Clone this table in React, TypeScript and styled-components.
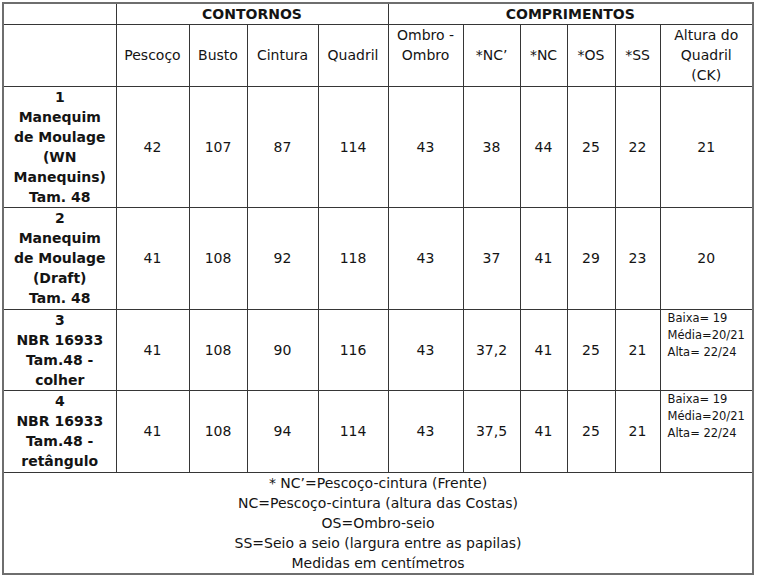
import React from 'react';
import styled, { createGlobalStyle } from 'styled-components';

const GlobalStyle = createGlobalStyle`
  html, body {
    margin: 0;
    padding: 0;
    background: #ffffff;
  }
`;

type Row = {
  label: string[];
  values: string[];
  altura: string[];
};

const contornos = ['Pescoço', 'Busto', 'Cintura', 'Quadril'];

const rows: Row[] = [
  {
    label: ['1', 'Manequim', 'de Moulage', '(WN', 'Manequins)', 'Tam. 48'],
    values: ['42', '107', '87', '114', '43', '38', '44', '25', '22'],
    altura: ['21'],
  },
  {
    label: ['2', 'Manequim', 'de Moulage', '(Draft)', 'Tam. 48'],
    values: ['41', '108', '92', '118', '43', '37', '41', '29', '23'],
    altura: ['20'],
  },
  {
    label: ['3', 'NBR 16933', 'Tam.48 -', 'colher'],
    values: ['41', '108', '90', '116', '43', '37,2', '41', '25', '21'],
    altura: ['Baixa= 19', 'Média=20/21', 'Alta= 22/24'],
  },
  {
    label: ['4', 'NBR 16933', 'Tam.48 -', 'retângulo'],
    values: ['41', '108', '94', '114', '43', '37,5', '41', '25', '21'],
    altura: ['Baixa= 19', 'Média=20/21', 'Alta= 22/24'],
  },
];

const rowHeights = [121, 102, 81, 82];

const legend = [
  '* NC’=Pescoço-cintura (Frente)',
  'NC=Pescoço-cintura (altura das Costas)',
  'OS=Ombro-seio',
  'SS=Seio a seio (largura entre as papilas)',
  'Medidas em centímetros',
];

const colWidths = [113, 73, 58, 71, 70, 75, 57, 47, 48, 45, 93];

const withBreaks = (lines: string[]) =>
  lines.map((line, i) => (
    <React.Fragment key={i}>
      {i > 0 && <br />}
      {line}
    </React.Fragment>
  ));

const App: React.FC = () => {
  return (
    <Page>
      <GlobalStyle />
      <Table>
        <colgroup>
          {colWidths.map((w, i) => (
            <col key={i} style={{ width: w }} />
          ))}
        </colgroup>
        <tbody>
          <tr style={{ height: 21 }}>
            <Cell />
            <GroupHead colSpan={4}>CONTORNOS</GroupHead>
            <GroupHead colSpan={6}>COMPRIMENTOS</GroupHead>
          </tr>
          <tr style={{ height: 62 }}>
            <Cell />
            {contornos.map((c) => (
              <Cell key={c}>{c}</Cell>
            ))}
            <Cell>{withBreaks(['Ombro -', 'Ombro', '\u00a0'])}</Cell>
            <Cell>*NC’</Cell>
            <Cell>*NC</Cell>
            <Cell>*OS</Cell>
            <Cell>*SS</Cell>
            <Cell>{withBreaks(['Altura do', 'Quadril', '(CK)'])}</Cell>
          </tr>
          {rows.map((row, r) => (
            <tr key={r} style={{ height: rowHeights[r] }}>
              <Label>{withBreaks(row.label)}</Label>
              {row.values.map((v, i) => (
                <Cell key={i}>{v}</Cell>
              ))}
              {row.altura.length > 1 ? (
                <NoteCell>{withBreaks(row.altura)}</NoteCell>
              ) : (
                <Cell>{row.altura[0]}</Cell>
              )}
            </tr>
          ))}
          <tr style={{ height: 102 }}>
            <Legend colSpan={11}>{withBreaks(legend)}</Legend>
          </tr>
        </tbody>
      </Table>
    </Page>
  );
};

const Page = styled.div`
  padding: 2px 0 0 2px;
  font-family: 'DejaVu Sans', Verdana, sans-serif;
  color: #141414;
`;

const Table = styled.table`
  border-collapse: collapse;
  table-layout: fixed;
  width: 751px;
  border: 2px solid #6e6e6e;
`;

const Cell = styled.td`
  border: 1px solid #363636;
  padding: 0;
  text-align: center;
  vertical-align: middle;
  font-size: 14px;
  line-height: 20px;
  white-space: nowrap;
`;

const GroupHead = styled(Cell)`
  font-weight: bold;
  line-height: 18px;
`;

const Label = styled(Cell)`
  font-weight: bold;
`;

const NoteCell = styled(Cell)`
  text-align: left;
  vertical-align: top;
  font-size: 11.5px;
  line-height: 17px;
  padding: 0 0 0 7px;
`;

const Legend = styled(Cell)`
  line-height: 20px;
`;

export default App;
